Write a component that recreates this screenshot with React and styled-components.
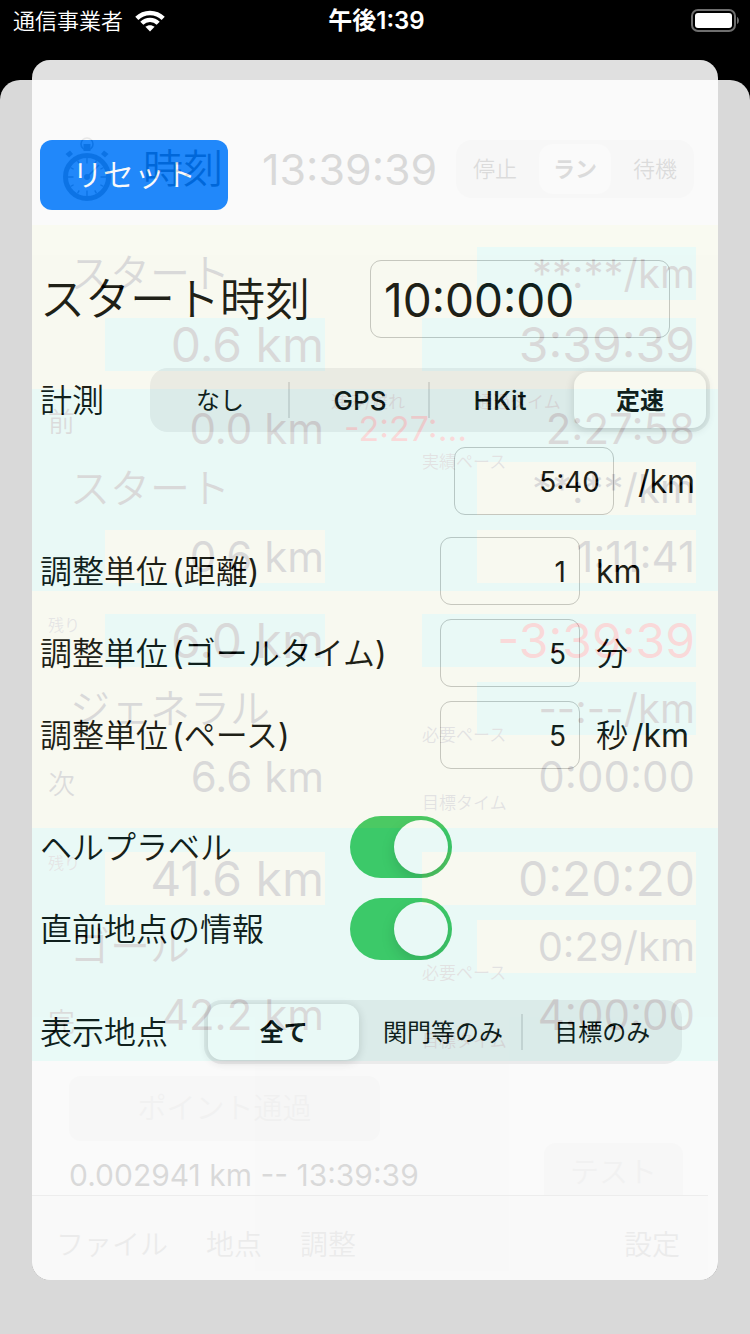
import React, { useState } from "react";
import styled, { createGlobalStyle, css } from "styled-components";

const GlobalStyle = createGlobalStyle`
  *, *::before, *::after { box-sizing: border-box; }
  html, body { margin: 0; padding: 0; background: #000; }
  body, button, input {
    font-family: Inter, "Noto Sans CJK JP", sans-serif;
    font-weight: 400;
  }
  button, input { margin: 0; }
`;

const Screen = styled.div`
  display: flex;
  flex-direction: column;
  min-height: 100vh;
  background: #000;
`;

/* ---------- status bar ---------- */

const StatusBar = styled.header`
  display: grid;
  grid-template-columns: 1fr auto 1fr;
  align-items: center;
  height: 40px;
  padding: 0 10px 0 13px;
  color: #fff;
  font-size: 22px;
  line-height: 42px;
`;

const Carrier = styled.div`
  display: flex;
  align-items: center;
  gap: 12px;
  font-weight: 350;
`;

const Clock = styled.div`
  font-size: 24px;
  font-weight: 600;
`;

const BatteryIcon = styled.svg`
  justify-self: end;
`;

/* ---------- stacked cards ---------- */

const Stage = styled.div`
  flex: 1;
  display: grid;
  grid-template-columns: minmax(0, 1fr);
  > * { grid-area: 1 / 1; }
`;

const BackCard = styled.div`
  margin-top: 40px;
  border-radius: 20px 20px 0 0;
  background: #d9d9d9;
`;

const Sheet = styled.div`
  display: grid;
  grid-template-columns: minmax(0, 1fr);
  margin: 20px 32px 54px;
  border-radius: 18px;
  overflow: hidden;
  background: #2f2f2f;
  > * { grid-area: 1 / 1; }
`;

/* ---------- race screen behind the sheet ---------- */

const Race = styled.div`
  margin-top: 20px;
  background: #dadada;
  color: #000;
  display: flex;
  flex-direction: column;
`;

const RaceHeader = styled.div`
  display: flex;
  align-items: center;
  height: 145px;
  padding: 32px 24px 0 29px;
`;

const RaceTitle = styled.div`
  margin-left: 30px;
  width: 119px;
  font-size: 40px;
  font-weight: 350;
  line-height: 60px;
`;

const RaceClock = styled.div`
  flex: 1;
  font-size: 43px;
  line-height: 60px;
`;

const ModeBar = styled.div`
  display: grid;
  grid-template-columns: repeat(3, 1fr);
  gap: 8px;
  width: 238px;
  height: 58px;
  padding: 4px 3px;
  border-radius: 16px;
  background: #c8c8c8;
`;

const ModeButton = styled.button`
  border: 0;
  padding: 0;
  border-radius: 14px;
  font-size: 22px;
  line-height: 30px;
  color: #101010;
  background: ${(p) => (p.$on ? "#dadada" : "transparent")};
  font-weight: ${(p) => (p.$on ? 700 : 350)};
`;

const Band = styled.div`
  display: flex;
  flex-direction: column;
  gap: ${(p) => p.$gap}px;
  padding: ${(p) => p.$pad};
  background: ${(p) => (p.$tone === "sun" ? "#d4daa0" : "#6edac8")};
`;

const BandRow = styled.div`
  position: relative;
  display: grid;
  grid-template-columns: 73px 220px 1fr 274px;
  height: 53px;
  margin-top: ${(p) => p.$tight || 0}px;
  line-height: 53px;
`;

const RowTag = styled.div`
  padding-left: 16px;
  font-weight: 350;
  font-size: ${(p) => (p.$small ? 16 : 27)}px;
  line-height: ${(p) => (p.$small ? 22 : p.$high ? 42 : 70)}px;
  color: ${(p) => (p.$small ? "#505050" : "#101010")};
  white-space: nowrap;
`;

const PlaceName = styled.div`
  grid-column: 1 / 3;
  padding-left: 38px;
  font-size: 40px;
  font-weight: 350;
`;

const figureSize = { big: 48, normal: 42, pace: 40 };

const Figure = styled.div`
  justify-self: end;
  grid-column: ${(p) => p.$col};
  width: ${(p) => p.$w}px;
  padding-right: 1px;
  text-align: right;
  white-space: nowrap;
  font-size: ${(p) => figureSize[p.$size || "normal"]}px;
  color: ${(p) => (p.$red ? "#da0000" : "inherit")};
  background: ${(p) =>
    p.$fill === "sun" ? "#d4daa0" : p.$fill === "sea" ? "#6edac8" : "transparent"};
`;

const Delay = styled.div`
  position: absolute;
  left: 312px;
  top: 0;
  font-size: 34px;
  color: #da0000;
`;

const Caption = styled.div`
  position: absolute;
  left: ${(p) => p.$left}px;
  ${(p) => (p.$top ? "top: -11px;" : "bottom: -11px;")}
  font-size: 17px;
  font-weight: 350;
  line-height: 22px;
  color: #404040;
`;

const PassRow = styled.div`
  display: flex;
  padding: 15px 37px 0;
`;

const PassButton = styled.button`
  width: 311px;
  height: 65px;
  border: 0;
  border-radius: 12px;
  background: #c6c6c6;
  color: #a0a0a0;
  font-size: 29px;
  font-weight: 350;
  line-height: 40px;
`;

const LogRow = styled.div`
  display: flex;
  justify-content: space-between;
  padding: 2px 35px 0 37px;
  font-size: 30px;
  line-height: 64px;
  height: 54px;
`;

const TestButton = styled.button`
  width: 139px;
  height: 52px;
  border: 0;
  border-radius: 12px 12px 0 0;
  background: #c6c6c6;
  color: #a0a0a0;
  font-size: 29px;
  font-weight: 350;
  line-height: 60px;
  padding: 0;
`;

const Toolbar = styled.nav`
  display: flex;
  align-items: center;
  gap: 38px;
  flex: 1;
  min-height: 85px;
  margin-right: 10px;
  padding: 14px 28px 0 24px;
  border-top: 1px solid #888;
  background: #d4d4d4;
`;

const ToolItem = styled.button`
  border: 0;
  padding: 0;
  background: none;
  font-size: 28px;
  font-weight: 350;
  line-height: 40px;
  color: #7c7c7c;
  margin-left: ${(p) => (p.$end ? "auto" : 0)};
`;

/* ---------- settings form ---------- */

const Settings = styled.form`
  opacity: 0.85;
  background: #fff;
  color: #000;
  padding: 80px 8px 216px;
  font-size: 32px;
`;

const ResetButton = styled.button`
  display: block;
  width: 188px;
  height: 70px;
  padding: 0;
  border: 0;
  border-radius: 12px;
  background: #007aff;
  color: #fff;
  font-size: 31px;
  font-weight: 350;
  line-height: 40px;
`;

const Row = styled.div`
  display: flex;
  align-items: center;
  justify-content: ${(p) => (p.$end ? "flex-end" : "flex-start")};
  margin-top: ${(p) => p.$gap}px;
`;

const labelText = css`
  padding-top: 2px;
  font-size: 32px;
  font-weight: 350;
  line-height: 44px;
  white-space: nowrap;
`;

const FieldLabel = styled.label`
  ${labelText}
  ${(p) => (p.$w ? `width: ${p.$w}px;` : "flex: 1;")}
`;

const TitleLabel = styled(FieldLabel)`
  font-size: 45px;
  line-height: 60px;
`;

const GroupLabel = styled.span`
  ${labelText}
  width: ${(p) => p.$w}px;
`;

const TextInput = styled.input`
  width: ${(p) => p.$w}px;
  height: ${(p) => (p.$large ? 78 : 68)}px;
  padding: 2px 13px 0;
  border: 1px solid #c4c4c4;
  border-radius: 11px;
  background: transparent;
  color: #000;
  outline: none;
  font-size: ${(p) => (p.$large ? 46 : 28)}px;
  text-align: ${(p) => (p.$large ? "left" : "right")};
`;

const Unit = styled.span`
  width: ${(p) => (p.$wide ? 96 : 130)}px;
  padding-top: 2px;
  padding-left: ${(p) => (p.$wide ? 24 : 16)}px;
  font-size: 32px;
  line-height: 44px;
  white-space: nowrap;
  font-weight: 350;
`;

const Latin = styled.span`
  font-weight: 400;
  margin-left: ${(p) => (p.$space ? 4 : 0)}px;
`;

const Segments = styled.div`
  flex: 1;
  display: flex;
  height: 64px;
  margin-right: ${(p) => p.$inset || 0}px;
  border-radius: 18px;
  background: #eeeeef;
`;

const SegmentLabel = styled.label`
  position: relative;
  flex: 1;
  display: flex;
  align-items: center;
  justify-content: center;
  margin: 4px;
  padding-top: 1px;
  border-radius: 14px;
  font-size: ${(p) => (p.$latin ? 26 : 24)}px;
  font-weight: ${(p) => (p.$on ? 700 : p.$latin ? 500 : 400)};
  line-height: 36px;
  ${(p) =>
    p.$on &&
    css`
      background: #fff;
      box-shadow: 0 2px 10px rgba(0, 0, 0, 0.16);
    `}
  ${(p) =>
    p.$divider &&
    css`
      &::after {
        content: "";
        position: absolute;
        right: -4px;
        top: 10px;
        bottom: 10px;
        width: 2px;
        background: #d2d2d4;
      }
    `}
  input {
    position: absolute;
    inset: 0;
    opacity: 0;
    appearance: none;
  }
`;

const Switch = styled.input`
  appearance: none;
  display: flex;
  align-items: center;
  width: 102px;
  height: 62px;
  padding: 4px;
  border-radius: 31px;
  background: #e9e9ea;
  overflow: hidden;
  &:checked {
    background: #34c759;
    justify-content: flex-end;
  }
  &::before {
    content: "";
    width: 54px;
    height: 54px;
    border-radius: 50%;
    background: #fff;
    box-shadow: 0 6px 14px rgba(0, 0, 0, 0.16);
  }
`;

function Wifi() {
  return (
    <svg width="30" height="22" viewBox="0 0 30 22" aria-hidden="true">
      <g fill="none" stroke="#fff" strokeWidth="4.4">
        <path d="M1.8 8.4C9 1.2 21 1.2 28.2 8.4" />
        <path d="M6.8 13.2C11.3 8.8 18.7 8.8 23.2 13.2" />
      </g>
      <path d="M15 21.6L10.4 16.8C12.9 14.6 17.1 14.6 19.6 16.8Z" fill="#fff" />
    </svg>
  );
}

function Battery() {
  return (
    <BatteryIcon width="49" height="24" viewBox="0 0 49 24" aria-label="battery full">
      <rect x="1" y="1" width="43" height="21" rx="6" fill="none" stroke="#6e6e6e" strokeWidth="2" />
      <rect x="4" y="4" width="37" height="15" rx="3" fill="#fff" />
      <path d="M46 8C48.600 9 48.600 14 46 15Z" fill="#6e6e6e" />
    </BatteryIcon>
  );
}

function Stopwatch() {
  const ticks = Array.from({ length: 12 }, (_, i) => i * 30);
  return (
    <svg width="52" height="66" viewBox="0 0 52 66" aria-hidden="true">
      <circle cx="26" cy="8" r="6" fill="none" stroke="#606060" strokeWidth="1.600" />
      <path d="M22.500 8H29.500V15H22.500Z" fill="#555" />
      <path d="M4.500 18L9 14.500L12 18L8 21.500Z M47.500 18L43 14.500L40 18L44 21.500Z" fill="#555" />
      <circle cx="26" cy="41" r="21.500" fill="none" stroke="#555" strokeWidth="5" />
      {ticks.map((a) => (
        <path
          key={a}
          d={a % 90 === 0 ? "M26 22V27.500" : "M26 22V25.500"}
          stroke="#555"
          strokeWidth="1.400"
          transform={`rotate(${a} 26 41)`}
        />
      ))}
      <path d="M24.500 42.500L38 29" stroke="#555" strokeWidth="1.600" />
      <circle cx="26" cy="41" r="3" fill="#555" />
    </svg>
  );
}

function RaceScreen() {
  return (
    <Race inert>
      <RaceHeader>
        <Stopwatch />
        <RaceTitle>時刻</RaceTitle>
        <RaceClock>13:39:39</RaceClock>
        <ModeBar>
          <ModeButton type="button">停止</ModeButton>
          <ModeButton type="button" $on>ラン</ModeButton>
          <ModeButton type="button">待機</ModeButton>
        </ModeBar>
      </RaceHeader>

      <Band $tone="sun" $gap={18} $pad="22px 22px 18px 0">
        <BandRow>
          <PlaceName>スタート</PlaceName>
          <Figure $col={4} $w={219} $fill="sea" $size="pace">**:**/km</Figure>
        </BandRow>
        <BandRow>
          <Figure $col={2} $w={220} $fill="sea" $size="big">0.6 km</Figure>
          <Figure $col={4} $w={274} $fill="sea" $size="big">3:39:39</Figure>
        </BandRow>
      </Band>

      <Band $tone="sea" $gap={7} $pad="13px 22px 8px 0">
        <BandRow>
          <RowTag $high>前</RowTag>
          <Figure $col={2} $w={220}>0.0 km</Figure>
          <Delay>-2:27:…</Delay>
          <Figure $col={4} $w={274}>2:27:58</Figure>
          <Caption $left={299} $top>進み/遅れ</Caption>
          <Caption $left={444} $top>通過タイム</Caption>
        </BandRow>
        <BandRow>
          <PlaceName>スタート</PlaceName>
          <Figure $col={4} $w={219} $fill="sun" $size="pace">**:**/km</Figure>
          <Caption $left={390} $top>実績ペース</Caption>
        </BandRow>
        <BandRow $tight={8}>
          <Figure $col={2} $w={220} $fill="sun">0.6 km</Figure>
          <Figure $col={4} $w={219} $fill="sun">1:11:41</Figure>
        </BandRow>
      </Band>

      <Band $tone="sun" $gap={15} $pad="23px 22px 25px 0">
        <BandRow>
          <RowTag $small>残り</RowTag>
          <Figure $col={2} $w={220} $fill="sea" $size="big">6.0 km</Figure>
          <Figure $col={4} $w={274} $fill="sea" $size="big" $red>-3:39:39</Figure>
        </BandRow>
        <BandRow>
          <PlaceName>ジェネラル</PlaceName>
          <Figure $col={4} $w={219} $fill="sea" $size="pace">--:--/km</Figure>
          <Caption $left={390}>必要ペース</Caption>
        </BandRow>
        <BandRow>
          <RowTag>次</RowTag>
          <Figure $col={2} $w={220}>6.6 km</Figure>
          <Figure $col={4} $w={274}>0:00:00</Figure>
          <Caption $left={390}>目標タイム</Caption>
        </BandRow>
      </Band>

      <Band $tone="sea" $gap={15} $pad="24px 22px 20px 0">
        <BandRow>
          <RowTag $small>残り</RowTag>
          <Figure $col={2} $w={220} $fill="sun" $size="big">41.6 km</Figure>
          <Figure $col={4} $w={274} $fill="sun" $size="big">0:20:20</Figure>
        </BandRow>
        <BandRow>
          <PlaceName>ゴール</PlaceName>
          <Figure $col={4} $w={219} $fill="sun" $size="pace">0:29/km</Figure>
          <Caption $left={390}>必要ペース</Caption>
        </BandRow>
        <BandRow>
          <RowTag>完</RowTag>
          <Figure $col={2} $w={220}>42.2 km</Figure>
          <Figure $col={4} $w={274}>4:00:00</Figure>
          <Caption $left={390}>目標タイム</Caption>
        </BandRow>
      </Band>

      <PassRow>
        <PassButton type="button">ポイント通過</PassButton>
      </PassRow>
      <LogRow>
        <span>0.002941 km -- 13:39:39</span>
        <TestButton type="button">テスト</TestButton>
      </LogRow>
      <Toolbar>
        <ToolItem type="button">ファイル</ToolItem>
        <ToolItem type="button">地点</ToolItem>
        <ToolItem type="button">調整</ToolItem>
        <ToolItem type="button" $end>設定</ToolItem>
      </Toolbar>
    </Race>
  );
}

function SegmentedControl({ name, label, options, initial, inset }) {
  const [value, setValue] = useState(initial);
  const active = options.indexOf(value);
  return (
    <Segments role="radiogroup" aria-label={label} $inset={inset}>
      {options.map((option, i) => (
        <SegmentLabel
          key={option}
          $on={i === active}
          $latin={/^[A-Za-z]+$/.test(option)}
          $divider={i < options.length - 1 && i !== active && i + 1 !== active}
        >
          <input type="radio" name={name} checked={i === active} onChange={() => setValue(option)} />
          {option}
        </SegmentLabel>
      ))}
    </Segments>
  );
}

function UnitLabel({ id, children }) {
  return (
    <FieldLabel htmlFor={id}>
      調整単位<Latin $space>(</Latin>{children}<Latin>)</Latin>
    </FieldLabel>
  );
}

function SettingsForm() {
  return (
    <Settings onSubmit={(e) => e.preventDefault()}>
      <ResetButton type="button">リセット</ResetButton>

      <Row $gap={50}>
        <TitleLabel htmlFor="start" $w={330}>スタート時刻</TitleLabel>
        <TextInput id="start" $w={300} $large defaultValue="10:00:00" />
      </Row>

      <Row $gap={30}>
        <GroupLabel $w={110}>計測</GroupLabel>
        <SegmentedControl
          name="measure"
          label="計測"
          options={["なし", "GPS", "HKit", "定速"]}
          initial="定速"
        />
      </Row>

      <Row $gap={15} $end>
        <TextInput $w={160} defaultValue="5:40" aria-label="定速" />
        <Unit $wide><Latin>/km</Latin></Unit>
      </Row>

      <Row $gap={22}>
        <UnitLabel id="unit-distance">距離</UnitLabel>
        <TextInput id="unit-distance" $w={140} defaultValue="1" />
        <Unit><Latin>km</Latin></Unit>
      </Row>
      <Row $gap={14}>
        <UnitLabel id="unit-goal">ゴールタイム</UnitLabel>
        <TextInput id="unit-goal" $w={140} defaultValue="5" />
        <Unit>分</Unit>
      </Row>
      <Row $gap={14}>
        <UnitLabel id="unit-pace">ペース</UnitLabel>
        <TextInput id="unit-pace" $w={140} defaultValue="5" />
        <Unit>秒<Latin $space>/km</Latin></Unit>
      </Row>

      <Row $gap={47}>
        <FieldLabel htmlFor="help" $w={310}>ヘルプラベル</FieldLabel>
        <Switch id="help" type="checkbox" role="switch" defaultChecked />
      </Row>
      <Row $gap={20}>
        <FieldLabel htmlFor="previous" $w={310}>直前地点の情報</FieldLabel>
        <Switch id="previous" type="checkbox" role="switch" defaultChecked />
      </Row>

      <Row $gap={40}>
        <GroupLabel $w={164}>表示地点</GroupLabel>
        <SegmentedControl
          name="points"
          label="表示地点"
          options={["全て", "関門等のみ", "目標のみ"]}
          initial="全て"
          inset={28}
        />
      </Row>
    </Settings>
  );
}

export default function App() {
  return (
    <>
      <GlobalStyle />
      <Screen>
        <StatusBar>
          <Carrier>
            通信事業者
            <Wifi />
          </Carrier>
          <Clock>午後1:39</Clock>
          <Battery />
        </StatusBar>
        <Stage>
          <BackCard />
          <Sheet>
            <RaceScreen />
            <SettingsForm />
          </Sheet>
        </Stage>
      </Screen>
    </>
  );
}
